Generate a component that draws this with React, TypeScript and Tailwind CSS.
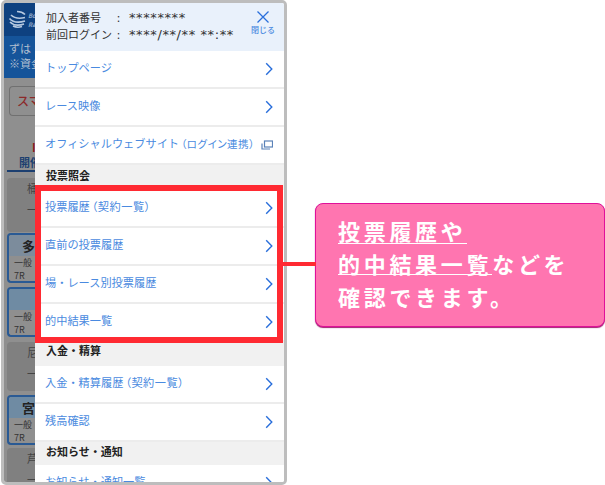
const jp = "font-['Noto_Sans_CJK_JP','Noto_Sans',sans-serif]";

function Chevron() {
  return (
    <svg width="8" height="14" viewBox="0 0 8 14" fill="none" stroke="#2a6fdb" strokeWidth="1.4">
      <path d="M1.2 1.2l5.6 5.8-5.6 5.8" />
    </svg>
  );
}

function Row({ label, note, small, external }: { label: string; note?: string; small?: boolean; external?: boolean }) {
  return (
    <div className="flex h-[38px] shrink-0 items-center justify-between border-b-2 border-[#ececec] bg-white pl-[11px] pr-[11px]">
      <span className="-ml-[1px] whitespace-nowrap pb-[3px] text-[11.2px] text-[#4a8ae0]">
        {label}
        {note && (
          <span className={`pl-[2px] tracking-[0.5px] [font-feature-settings:'palt'] ${small ? "text-[10.5px]" : ""}`}>{note}</span>
        )}
      </span>
      {external ? (
        <svg width="12" height="10" viewBox="0 0 12 10" fill="none" stroke="#5a82b8" strokeWidth="1.2">
          <rect x="3.5" y="1" width="8" height="6" />
          <path d="M1 3.5V9h8" />
        </svg>
      ) : (
        <Chevron />
      )}
    </div>
  );
}

function Section({ label, cls }: { label: string; cls: string }) {
  return (
    <div className={`shrink-0 bg-[#f1f1f1] pl-[11px] text-[11px] font-bold leading-[17px] text-[#222222] ${cls}`}>{label}</div>
  );
}

function BlueCard({ name, top, tone }: { name: string; top: string; tone: string }) {
  return (
    <div className={`ml-[3px] h-[50px] overflow-hidden rounded-l-[4px] border-2 border-r-0 border-[#2a5a94] ${top}`}>
      <div className={`flex h-[21px] items-center justify-end text-[13px] font-bold leading-[21px] text-[#222222] ${tone}`}>{name}</div>
      <div className="pl-[5px] text-[9px] leading-[13px] text-[#333333]">
        <div className="whitespace-nowrap">一般</div>
        <div>7R</div>
      </div>
    </div>
  );
}

function GreyCard({ name, top, h }: { name: string; top: string; h: string }) {
  return (
    <div className={`ml-[3px] rounded-l-[4px] bg-[#808080] pl-[20px] pt-[2px] text-[11px] leading-[16px] text-[#444444] ${top} ${h}`}>
      <div>{name}</div>
      <div className="pt-[5px]">一</div>
    </div>
  );
}

function Background() {
  return (
    <div className="w-[31px] shrink-0 overflow-hidden bg-[#8f8f8f]">
      <div className="flex h-[33px] items-center gap-[2px] overflow-hidden bg-[#0e4180] pl-[4px]">
        <svg className="shrink-0" width="18" height="19" viewBox="0 0 18 19" fill="none" stroke="#b5c8df" strokeWidth="1.6">
          <path d="M9 1.5c3 0 6 1 8 3M3 5c3 3 8 4 14 2.5M1.5 8.5c3 3.5 9 4.5 15.5 2.5M2 12c3 3 8 4 14 2M5 16c3 1.5 6 1.5 9 .5" />
        </svg>
        <div className="text-[6px] font-bold italic leading-[9px] text-[#8fa8c8]">
          <div>Bo</div>
          <div>Ra</div>
        </div>
      </div>
      <div className="h-[42px] overflow-hidden whitespace-nowrap bg-[#15549a] pl-[5px] pt-[5px] text-[11px] leading-[15px] text-[#b0bfd0]">
        <div>ずは</div>
        <div>※資金</div>
      </div>
      <div className="ml-[5px] mt-[8px] flex h-[30px] items-center overflow-hidden whitespace-nowrap rounded-l-[4px] border border-r-0 border-[#707070] pl-[7px] text-[12px] font-medium text-[#8c2a2a]">スマ</div>
      <div className="mt-[24px] h-[30px] text-[11px] font-bold leading-[15px]">
        <div className="h-[15px] pl-[28px] text-[#8c1c1c]">I</div>
        <div className="overflow-hidden whitespace-nowrap pl-[15px] text-[#1c3f70]">開催</div>
      </div>
      <div className="ml-[3px] h-[2px] bg-[#1c3f70]" />
      <GreyCard name="桶" top="mt-[6px]" h="h-[54px]" />
      <BlueCard name="多" top="mt-[1px]" tone="bg-[#7c8c9c]" />
      <BlueCard name="" top="mt-[4px]" tone="bg-[#6f8ba3]" />
      <GreyCard name="尼" top="mt-[5px]" h="h-[49px]" />
      <BlueCard name="宮" top="mt-[4px]" tone="bg-[#6f8ba3]" />
      <GreyCard name="芦" top="mt-[3px]" h="h-[60px]" />
    </div>
  );
}

export default function App() {
  return (
    <div className={`relative flex h-[485px] w-[605px] overflow-hidden bg-white ${jp}`}>
      <div className="ml-[1px] flex h-[485px] w-[286px] shrink-0 overflow-hidden rounded-[5px] border-[3px] border-[#bdbdbd]">
        <Background />
        <div className="flex min-w-0 flex-1 flex-col overflow-hidden">
          <div className="flex h-[48px] shrink-0 items-start justify-between bg-[#e9f1fb] pl-[11px] pr-[9px] pt-[6px] text-[#333333]">
            <div className="whitespace-nowrap text-[11px] leading-[16px]">
              <div className="flex">
                <span className="w-[71px]">加入者番号</span>
                <span className="w-[12px]">:</span>
                <span className="pt-[1px] font-['DejaVu_Sans',sans-serif] text-[13px] tracking-[0.6px]">********</span>
              </div>
              <div className="flex">
                <span className="w-[71px]">前回ログイン</span>
                <span className="w-[12px]">:</span>
                <span className="pt-[1px] font-['DejaVu_Sans',sans-serif] text-[13px] tracking-[0.6px]">****/**/** **:**</span>
              </div>
            </div>
            <div className="flex flex-col items-center pt-[1px]">
              <svg width="14" height="14" viewBox="0 0 14 14" fill="none" stroke="#2a6fdb" strokeWidth="1.3">
                <path d="M1.5 1.5l11 11M12.5 1.5l-11 11" />
              </svg>
              <span className="text-[8px] font-medium leading-[11px] text-[#4a8ae0]">閉じる</span>
            </div>
          </div>
          <Row label="トップページ" />
          <Row label="レース映像" />
          <Row label="オフィシャルウェブサイト" note="（ログイン連携）" small external />
          <Section label="投票照会" cls="h-[25px] pt-[2px]" />
          <Row label="投票履歴" note="（契約一覧）" />
          <Row label="直前の投票履歴" />
          <Row label="場・レース別投票履歴" />
          <Row label="的中結果一覧" />
          <Section label="入金・精算" cls="h-[24px]" />
          <Row label="入金・精算履歴" note="（契約一覧）" />
          <Row label="残高確認" />
          <Section label="お知らせ・通知" cls="h-[23px] pt-[1px]" />
          <Row label="お知らせ・通知一覧" />
        </div>
      </div>
      <div className="absolute left-[35px] top-[185px] h-[158px] w-[248px] border-[6px] border-[#ff2a32]" />
      <div className="absolute left-[283px] top-[262px] h-[4px] w-[33px] bg-[#ff2a32]" />
      <div className="ml-[28px] mt-[203px] h-[124px] w-[290px] rounded-[8px] border border-[#e0109a] bg-[#ff75b0] pl-[22px] pt-[10px] text-[22px] font-bold leading-[33px] tracking-[3.7px] text-white shadow-[0_1px_1px_#a0206e]">
        <div className="flex"><span className="h-[30px] border-b border-white">投票履歴や</span></div>
        <div className="mt-[3px] flex whitespace-nowrap"><span className="h-[28px] border-b border-white">的中結果一覧</span>などを</div>
        <div className="whitespace-nowrap">確認できます。</div>
      </div>
    </div>
  );
}
